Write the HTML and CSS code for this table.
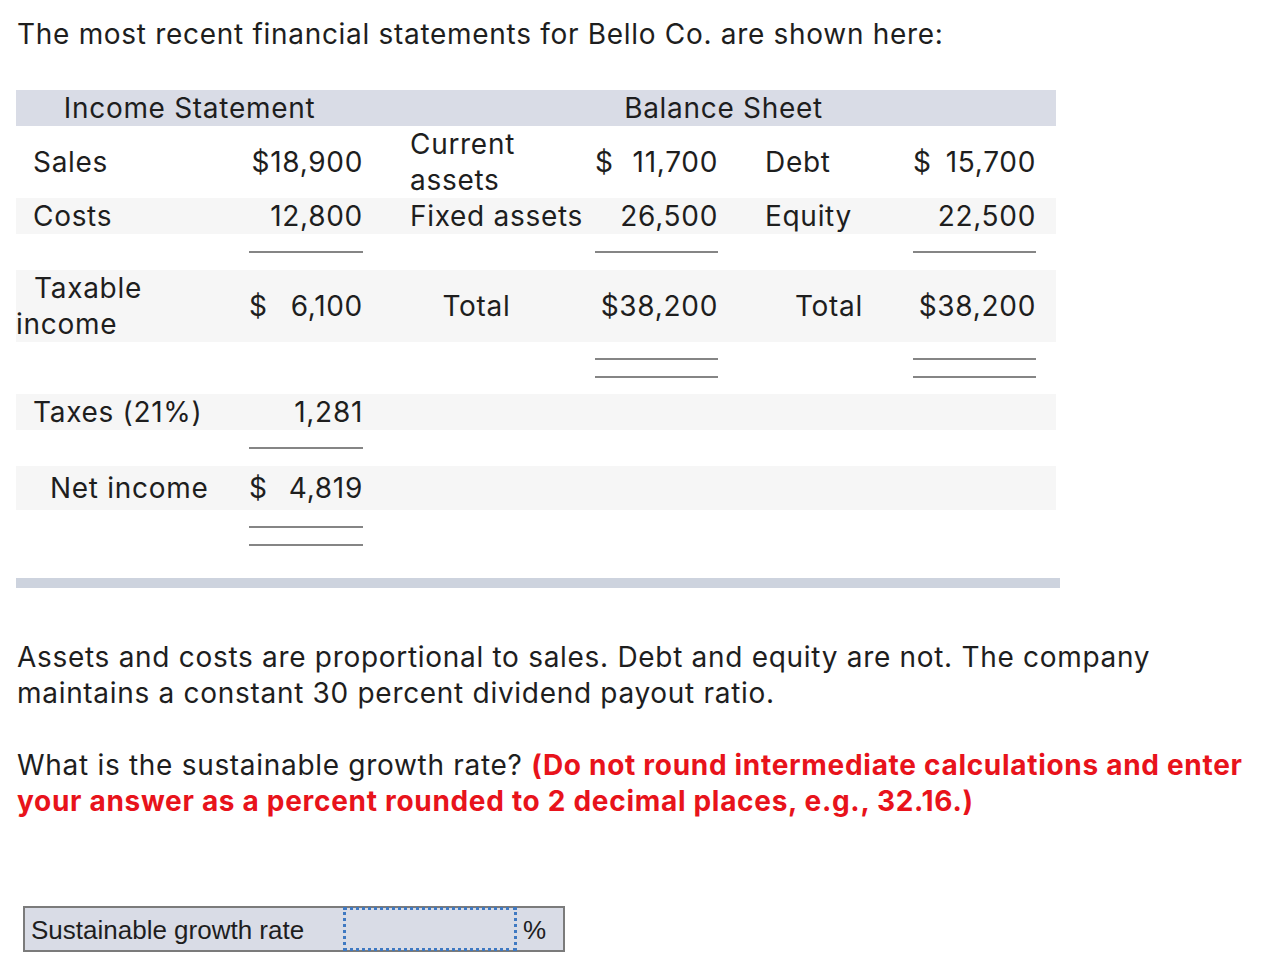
FILE: index.html
```html
<!DOCTYPE html>
<html>
<head>
<meta charset="utf-8">
<link rel="stylesheet" href="styles.css">
</head>
<body>
<p class="intro">The most recent financial statements for Bello Co. are shown here:</p>
<div class="fin">
  <div class="frow head">
    <div class="hc is-head">Income Statement</div>
    <div class="hc bs-head">Balance Sheet</div>
  </div>
  <div class="frow">
    <div class="lbl">Sales</div>
    <div class="val c2">$18,900</div>
    <div class="lbl2">Current<br>assets</div>
    <div class="val c4"><span>$</span><span>11,700</span></div>
    <div class="lbl2">Debt</div>
    <div class="val c6"><span>$</span><span>15,700</span></div>
  </div>
  <div class="frow shade">
    <div class="lbl">Costs</div>
    <div class="val c2">12,800</div>
    <div class="lbl2">Fixed assets</div>
    <div class="val c4">26,500</div>
    <div class="lbl2">Equity</div>
    <div class="val c6">22,500</div>
  </div>
  <div class="frow spacer">
    <div></div>
    <div class="ul c2"><div class="line"></div></div>
    <div></div>
    <div class="ul c4"><div class="line"></div></div>
    <div></div>
    <div class="ul c6"><div class="line"></div></div>
  </div>
  <div class="frow shade">
    <div class="lbl lbl-wrap"><span class="ind">Taxable</span><br>income</div>
    <div class="val c2"><span>$</span><span>6,100</span></div>
    <div class="total-a">Total</div>
    <div class="val c4">$38,200</div>
    <div class="total-b">Total</div>
    <div class="val c6">$38,200</div>
  </div>
  <div class="frow spacer dbl">
    <div></div>
    <div></div>
    <div></div>
    <div class="ul c4"><div class="line"></div><div class="line"></div></div>
    <div></div>
    <div class="ul c6"><div class="line"></div><div class="line"></div></div>
  </div>
  <div class="frow shade">
    <div class="lbl">Taxes (21%)</div>
    <div class="val c2">1,281</div>
  </div>
  <div class="frow spacer">
    <div></div>
    <div class="ul c2"><div class="line"></div></div>
  </div>
  <div class="frow shade net">
    <div class="lbl lbl-deep">Net income</div>
    <div class="val c2"><span>$</span><span>4,819</span></div>
  </div>
  <div class="frow spacer dbl">
    <div></div>
    <div class="ul c2"><div class="line"></div><div class="line"></div></div>
  </div>
</div>
<div class="bar"></div>

<p class="para">Assets and costs are proportional to sales. Debt and equity are not. The company maintains a constant 30 percent dividend payout ratio.</p>
<p class="para q">What is the sustainable growth rate? <strong class="warn">(Do not round intermediate calculations and enter your answer as a percent rounded to 2 decimal places, e.g., 32.16.)</strong></p>

<div class="answer">
  <span class="ans-label">Sustainable growth rate</span>
  <span class="ans-input"></span>
  <span class="ans-unit">%</span>
</div>
</body>
</html>
```
FILE: styles.css
```css
html, body {
  margin: 0;
  padding: 0;
  background: #ffffff;
}
body {
  font-family: "Inter", "Liberation Sans", sans-serif;
  font-size: 28px;
  line-height: 36px;
  letter-spacing: 0.7px;
  color: #1e1e1e;
  padding: 16px 0 0 17px;
}
.intro {
  margin: 0 0 38px 0;
}
.fin {
  width: 1040px;
  margin-left: -1px;
}
.frow {
  display: grid;
  grid-template-columns: 217px 146px 203px 152px 163px 159px;
  align-items: center;
  min-height: 36px;
}
.head {
  background: #d9dce6;
  grid-template-columns: 363px 677px;
}
.hc {
  text-align: center;
  white-space: nowrap;
}
.is-head { padding-right: 16px; }
.bs-head { padding-left: 12px; }
.shade { background: #f6f6f6; }
.net { min-height: 44px; }
.lbl {
  padding-left: 17px;
  white-space: nowrap;
}
.lbl-wrap { padding-left: 0; }
.lbl-wrap .ind { padding-left: 18px; }
.lbl-deep { padding-left: 34px; }
.val {
  display: flex;
  justify-content: flex-end;
  white-space: nowrap;
}
.val span:first-child:not(:last-child) { margin-right: auto; }
.c2 { padding: 0 16px 0 16px; }
.c4 { padding: 0 16px 0 13px; }
.c6 { padding: 0 20px 0 16px; }
.lbl2 {
  padding-left: 31px;
  white-space: nowrap;
}
.total-a { text-align: center; padding-right: 8px; }
.total-b { text-align: right; padding-right: 34px; }
.spacer {
  align-items: start;
  min-height: 36px;
}
.spacer.dbl { min-height: 52px; }
.line {
  border-top: 2px solid #858585;
  margin-top: 17px;
}
.dbl .line { margin-top: 16px; }
.bar {
  width: 1044px;
  height: 10px;
  background: #cdd3de;
  margin: 16px 0 0 -1px;
}
.para {
  margin: 51px 0 0 0;
  max-width: 1245px;
}
.q { margin-top: 36px; }
.warn {
  color: #e8131b;
  font-weight: bold;
}
.answer {
  display: flex;
  align-items: stretch;
  width: 538px;
  height: 42px;
  margin: 87px 0 0 6px;
  border: 2px solid #7b7b7b;
  background: #d9dce6;
  font-family: "Liberation Sans", Arial, sans-serif;
  font-size: 26px;
  letter-spacing: 0;
}
.ans-label {
  width: 312px;
  padding-left: 6px;
  line-height: 44px;
}
.ans-input {
  width: 168px;
  margin: -1px 0;
  border: 3px dotted #3f79c2;
}
.ans-unit {
  padding-left: 6px;
  line-height: 44px;
}
```
